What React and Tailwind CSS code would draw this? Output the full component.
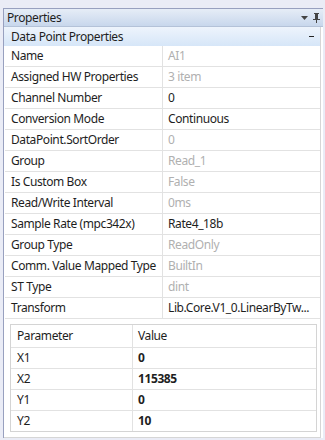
import React from 'react';

const rows = [
  { label: 'Name', value: 'AI1', muted: true },
  { label: 'Assigned HW Properties', value: '3 item', muted: true },
  { label: 'Channel Number', value: '0' },
  { label: 'Conversion Mode', value: 'Continuous' },
  { label: 'DataPoint.SortOrder', value: '0', muted: true },
  { label: 'Group', value: 'Read_1', muted: true },
  { label: 'Is Custom Box', value: 'False', muted: true },
  { label: 'Read/Write Interval', value: '0ms', muted: true },
  { label: 'Sample Rate (mpc342x)', value: 'Rate4_18b' },
  { label: 'Group Type', value: 'ReadOnly', muted: true },
  { label: 'Comm. Value Mapped Type', value: 'BuiltIn', muted: true },
  { label: 'ST Type', value: 'dint', muted: true },
  { label: 'Transform', value: 'Lib.Core.V1_0.LinearByTw...' },
];

const params = [
  ['X1', '0'],
  ['X2', '115385'],
  ['Y1', '0'],
  ['Y2', '10'],
];

export default function App() {
  return (
    <div
      className="w-[325px] h-[440px] bg-[#eaecf6] pt-[8px] pl-[3px] pr-[2px] text-[12px] tracking-[-0.4px] text-[#1e1e1e] overflow-hidden"
      style={{ fontFamily: '"Segoe UI", "Noto Sans", sans-serif' }}
    >
      <div className="border-l border-t border-[#98a0bf] bg-white">
        {/* title bar */}
        <div className="h-[18px] flex items-center justify-between pl-[3px] pr-[3px] bg-gradient-to-b from-[#e6edf7] to-[#c8d7ec] border-b border-[#b4c2d8]">
          <span className="leading-none">Properties</span>
          <div className="flex items-center gap-[5px]">
            <svg width="7" height="4" viewBox="0 0 7 4">
              <path d="M0 0h7L3.5 4z" fill="#444" />
            </svg>
            <svg width="7" height="10" viewBox="0 0 7 10">
              <path d="M1 0h5v1h-1v5h2v1H4v3H3V7H0V6h2V1H1z" fill="#444" />
            </svg>
          </div>
        </div>

        <div className="mr-[2px] border-r border-[#d6d6d6]">
          {/* category header */}
          <div className="h-[19px] flex items-center justify-between pl-[7px] pr-[6px] bg-gradient-to-b from-[#eef4fc] to-[#d6e6f8]">
            <span className="leading-none">Data Point Properties</span>
            <span className="w-[5px] h-[1px] bg-[#222]" />
          </div>

          {rows.map((r) => (
            <div key={r.label} className="ml-[1px] h-[21px] flex border-b border-[#e2e2e2]">
              <div className="w-[158px] border-r border-[#e2e2e2] pl-[6px] flex items-center whitespace-nowrap">
                {r.label}
              </div>
              <div
                className={
                  r.muted
                    ? 'flex-1 pl-[5px] flex items-center whitespace-nowrap text-[#b0b0b0]'
                    : 'flex-1 pl-[5px] flex items-center whitespace-nowrap'
                }
              >
                {r.value}
              </div>
            </div>
          ))}

          {/* parameter table */}
          <div className="pt-[5px] pb-[5px] pl-[6px] pr-[3px] border-b border-[#d6d6d6]">
            <div className="border border-[#d4d4d4]">
              <div className="h-[23px] flex border-b border-[#e2e2e2]">
                <div className="w-[122px] border-r border-[#e2e2e2] pl-[6px] flex items-center">Parameter</div>
                <div className="flex-1 pl-[5px] flex items-center">Value</div>
              </div>
              {params.map(([p, v], i) => (
                <div
                  key={p}
                  className={
                    i < params.length - 1
                      ? 'h-[21px] flex border-b border-[#e2e2e2]'
                      : 'h-[20px] flex'
                  }
                >
                  <div className="w-[122px] border-r border-[#e2e2e2] pl-[6px] flex items-center">{p}</div>
                  <div className="flex-1 pl-[5px] flex items-center font-bold">{v}</div>
                </div>
              ))}
            </div>
          </div>
        </div>
      </div>
    </div>
  );
}
